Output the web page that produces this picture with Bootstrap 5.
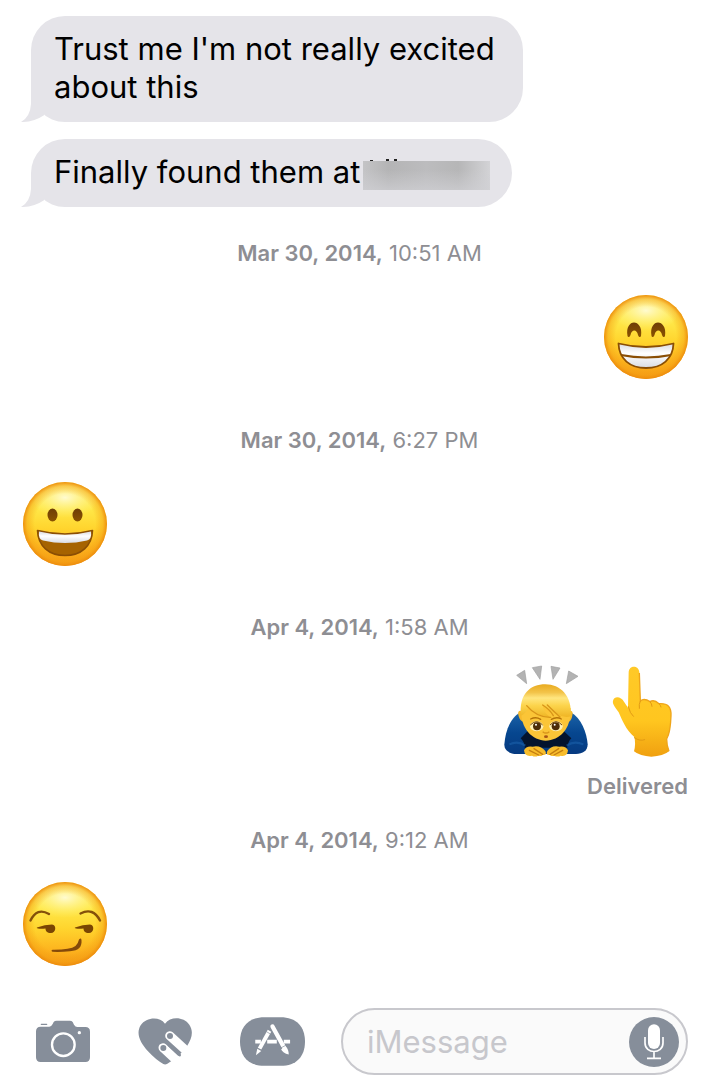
<!DOCTYPE html>
<html lang="en">
<head>
<meta charset="utf-8">
<meta name="viewport" content="width=device-width, initial-scale=1">
<title>Messages</title>
<link rel="stylesheet" href="https://cdn.jsdelivr.net/npm/bootstrap@5.3.0/dist/css/bootstrap.min.css">
<style>
  body { font-family: Inter, "Liberation Sans", sans-serif; color: #000; background: #fff; }
  svg { display: block; flex: none; }
  .thread { padding: 16px 31px 0 23px; }
  .bubble { max-width: 74%; margin-left: 8px; padding: 14px 22px 16px 23px; border-radius: 34px; background: #e5e4e9; font-size: 31px; line-height: 38px; }
  .bubble + .bubble { margin-top: 17px; }
  .tail { left: -10px; bottom: 0; fill: #e5e4e9; }
  .redacted { display: inline-block; vertical-align: -7px; margin-left: -6px; }
  .stamp { margin: 47px 0 28px 8px; font-size: 22px; line-height: 28px; color: #8e8e93; }
  .bubble + .stamp { margin-top: 32px; }
  .stamp b, .receipt { font-weight: 600; }
  .receipt { margin-top: 15px; font-size: 22px; line-height: 28px; color: #8e8e93; }
  .receipt + .stamp { margin-top: 26px; }
  .tall-row { margin-top: -4px; }
  .composer { padding: 24px 31px 8px 36px; }
  .tools { gap: 48px; margin-right: 36px; }
  .tools button, .mic { background: none; line-height: 0; }
  .field { min-width: 0; height: 67px; border: 2px solid #c8c8cd; border-radius: 34px; background: #fafafa; padding: 0 7px 0 24px; }
  .field input { min-width: 0; font-size: 31px; line-height: 38px; color: #000; outline: 0; }
  .field input::placeholder { color: #c7c7cc; opacity: 1; }
</style>
</head>
<body>
<svg width="0" height="0" class="position-absolute" aria-hidden="true">
  <defs>
    <linearGradient id="skin" x1="0" y1="0" x2="0" y2="1">
      <stop offset="0" stop-color="#fff06a"/><stop offset=".3" stop-color="#ffe94a"/><stop offset=".55" stop-color="#ffd52e"/><stop offset=".8" stop-color="#fdb51f"/><stop offset="1" stop-color="#f59a15"/>
    </linearGradient>
    <radialGradient id="rim" cx=".5" cy=".5" r=".5">
      <stop offset=".72" stop-color="#f29a10" stop-opacity="0"/><stop offset=".9" stop-color="#f39c12" stop-opacity=".45"/><stop offset="1" stop-color="#ec8a0c" stop-opacity=".95"/>
    </radialGradient>
    <radialGradient id="shine" cx=".5" cy=".4" r=".6">
      <stop offset="0" stop-color="#fffbd0"/><stop offset="1" stop-color="#fff27a" stop-opacity="0"/>
    </radialGradient>
    <linearGradient id="teeth" x1="0" y1="0" x2="0" y2="1">
      <stop offset="0" stop-color="#d9dbe2"/><stop offset=".4" stop-color="#fff"/><stop offset="1" stop-color="#d9dce3"/>
    </linearGradient>
    <linearGradient id="eye" x1="0" y1="0" x2="0" y2="1">
      <stop offset="0" stop-color="#6e3d06"/><stop offset="1" stop-color="#8a5200"/>
    </linearGradient>
    <linearGradient id="blue" x1="0" y1="0" x2="0" y2="1">
      <stop offset="0" stop-color="#1b63a8"/><stop offset=".5" stop-color="#06468f"/><stop offset="1" stop-color="#063a80"/>
    </linearGradient>
    <linearGradient id="hair" x1="0" y1="0" x2="0" y2="1">
      <stop offset="0" stop-color="#e9ab20"/><stop offset=".25" stop-color="#f3c44a"/><stop offset=".42" stop-color="#ffe680"/><stop offset=".65" stop-color="#fcd44c"/><stop offset="1" stop-color="#efb525"/>
    </linearGradient>
    <linearGradient id="hand" x1="0" y1="0" x2="0" y2="1">
      <stop offset="0" stop-color="#ffc928"/><stop offset=".6" stop-color="#ffc61f"/><stop offset="1" stop-color="#f0a010"/>
    </linearGradient>
    <linearGradient id="mosaic" x1="0" x2="1">
      <stop offset="0" stop-color="#c4c4c6"/><stop offset=".2" stop-color="#b4b4b5"/><stop offset=".5" stop-color="#bcbcbe"/><stop offset=".75" stop-color="#b6b6b7"/><stop offset="1" stop-color="#d3d3d6"/>
    </linearGradient>
    <linearGradient id="mosaicFade" x1="0" y1="0" x2="0" y2="1">
      <stop offset=".3" stop-color="#d0d0d4" stop-opacity="0"/><stop offset="1" stop-color="#d0d0d4" stop-opacity=".7"/>
    </linearGradient>
    <symbol id="face" viewBox="0 0 84 84">
      <circle cx="42" cy="42" r="42" fill="url(#skin)"/>
      <ellipse cx="42" cy="19" rx="31" ry="17" fill="url(#shine)"/>
      <circle cx="42" cy="42" r="42" fill="url(#rim)"/>
    </symbol>
    <symbol id="tailShape" viewBox="32 250 69 102">
      <path d="M62 250V298Q60 336 32 352Q70 353 101 332V250Z"/>
    </symbol>
  </defs>
</svg>

<div class="d-flex flex-column min-vh-100">
  <main class="thread d-flex flex-column">
    <div class="bubble position-relative align-self-start">Trust me I'm not really excited about this
      <svg class="tail position-absolute" width="23" height="34" aria-hidden="true"><use href="#tailShape"/></svg>
    </div>
    <div class="bubble position-relative align-self-start">Finally found them at
      <svg class="redacted" width="127" height="31" viewBox="0 0 127 31" role="img" aria-label="Hidden name">
        <path d="M7 1h3v1H7zM23 0h3v2h-3zM31 0h3v2h-3z" fill="#222"/>
        <path d="M0 2h127v29H0z" fill="url(#mosaic)"/><path d="M0 2h127v29H0z" fill="url(#mosaicFade)"/>
      </svg>
      <svg class="tail position-absolute" width="23" height="34" aria-hidden="true"><use href="#tailShape"/></svg>
    </div>

    <div class="stamp text-center"><b>Mar 30, 2014,</b> 10:51 AM</div>
    <div class="d-flex justify-content-end">
      <svg width="84" height="84" viewBox="0 0 84 84" role="img" aria-label="Beaming face">
        <use href="#face" width="84" height="84"/>
        <path d="M23.500 41C22 32 26 27.500 30 27.500S38.500 32 37 41C36.500 43 34.500 42 34 40C33 34 27.500 34 26.500 40C26 42 24 43 23.500 41Z" fill="url(#eye)"/>
        <path d="M47.500 41C46 32 50 27.500 54 27.500S62.500 32 61 41C60.500 43 58.500 42 58 40C57 34 51.500 34 50.500 40C50 42 48 43 47.500 41Z" fill="url(#eye)"/>
        <path d="M14.500 48.500Q42 55.500 69.500 48.500C69 64 58 73 42 73S15 64 14.500 48.500Z" fill="url(#teeth)" stroke="#8a4e04" stroke-width="1.800" stroke-linejoin="round"/>
        <path d="M17 60Q42 65 67 60" fill="none" stroke="#8a4e04" stroke-width="2"/>
      </svg>
    </div>

    <div class="stamp text-center"><b>Mar 30, 2014,</b> 6:27 PM</div>
    <div class="d-flex">
      <svg width="84" height="84" viewBox="0 0 84 84" role="img" aria-label="Grinning face">
        <use href="#face" width="84" height="84"/>
        <ellipse cx="29.500" cy="33" rx="5" ry="6.500" fill="url(#eye)"/><ellipse cx="54.500" cy="33" rx="5" ry="6.500" fill="url(#eye)"/>
        <path d="M14.500 48.500Q42 55.500 69.500 48.500C69 64 58 73.500 42 73.500S15 64 14.500 48.500Z" fill="#a66300" stroke="#8a4e04" stroke-width="1.600" stroke-linejoin="round"/>
        <path d="M16 49.500Q42 56 68 49.500Q69 57 64 58.500Q42 63.500 20 58.500Q15 57 16 49.500Z" fill="url(#teeth)"/>
      </svg>
    </div>

    <div class="stamp text-center"><b>Apr 4, 2014,</b> 1:58 AM</div>
    <div class="tall-row d-flex justify-content-end gap-3">
      <svg width="84" height="92" viewBox="42 30 252 276" role="img" aria-label="Person bowing">
        <g fill="#b3b3b3" stroke="#a0a0a0" stroke-width="2" stroke-linejoin="round"><path d="M80 61L104 46L110 86Z"/><path d="M127 38L155 33L150 73Z"/><path d="M183 34L210 39L189 73Z"/><path d="M236 48L264 64L229 86Z"/></g>
        <path d="M43 268C46 232 58 190 92 172H242C274 190 290 232 293 268C293 288 278 297 258 297H80C60 297 43 288 43 268Z" fill="url(#blue)"/>
        <path d="M92 250Q104 262 104 278H232Q234 260 244 250L218 225H116Z" fill="#04142e"/>
        <path d="M58 268Q84 256 106 272M280 268Q252 256 230 272" fill="none" stroke="#1b61aa" stroke-width="6" opacity=".6"/>
        <path d="M96 168Q80 164 86 184Q92 202 102 200ZM238 168Q252 164 246 186Q242 202 232 200Z" fill="#f5b92c"/>
        <path d="M93 160C91 224 128 256 167 257C208 256 244 224 242 160Q168 110 93 160Z" fill="#fbc537"/>
        <path d="M93 182C86 116 122 88 166 88S248 122 242 184Q222 190 200 176Q174 162 158 150Q160 172 180 186Q140 184 116 158Q106 176 93 182Z" fill="url(#hair)"/>
        <path d="M110 152Q140 188 182 187M158 150Q180 164 190 182M172 150Q194 172 210 186" fill="none" stroke="#d89519" stroke-width="4" stroke-linecap="round"/>
        <path d="M122 192Q138 184 152 193M184 193Q200 184 214 192" fill="none" stroke="#b67409" stroke-width="4" stroke-linecap="round"/>
        <ellipse cx="140" cy="214" rx="20" ry="15" fill="#fff0b5"/><ellipse cx="198" cy="214" rx="20" ry="15" fill="#fff0b5"/>
        <circle cx="141" cy="214" r="12" fill="#4c2c08"/><circle cx="197" cy="214" r="12" fill="#4c2c08"/><circle cx="138" cy="209" r="3" fill="#fff"/><circle cx="194" cy="209" r="3" fill="#fff"/>
        <path d="M121 210Q140 190 158 210M180 210Q198 190 216 210" fill="none" stroke="#6f4308" stroke-width="3"/>
        <path d="M158 230Q168 238 178 230" fill="none" stroke="#d8951b" stroke-width="4"/><ellipse cx="168" cy="245" rx="6" ry="4" fill="#a95516"/>
        <path d="M102 286Q108 272 128 275Q152 270 166 288Q172 301 158 300Q156 305 145 302Q135 307 126 302Q104 306 102 286Z" fill="#f8bd2c"/>
        <path d="M234 286Q228 272 208 275Q184 270 172 288Q166 301 180 300Q182 305 193 302Q203 307 212 302Q232 306 234 286Z" fill="#f8bd2c"/>
        <path d="M118 286L146 300M132 281L158 298M218 286L192 300M206 281L180 298" stroke="#c47d10" stroke-width="4" stroke-linecap="round"/>
      </svg>
      <svg width="84" height="92" viewBox="342 30 252 276" role="img" aria-label="Pointing up">
        <path d="M416 52C417 30 446 30 448 52L451 138Q462 128 480 140Q492 132 507 146C534 144 544 156 543 182C542 214 540 234 530 252Q530 272 537 289Q520 304 484 305Q450 304 432 289Q438 266 433 246C406 222 398 198 386 172C378 158 366 148 369 137C374 121 394 126 402 140L414 158Z" fill="url(#hand)"/>
        <path d="M448 54L451 138Q462 128 480 140Q492 132 507 146C534 144 544 156 543 182C542 214 540 234 530 252Q530 272 537 289" fill="none" stroke="#efa51a" stroke-width="4"/>
        <path d="M415 155Q420 176 430 184M451 138Q446 148 448 160M480 140Q486 146 486 154M507 146Q512 150 513 156M433 248Q450 260 464 254" fill="none" stroke="#e29a14" stroke-width="3" stroke-linecap="round"/>
      </svg>
    </div>
    <div class="receipt text-end">Delivered</div>

    <div class="stamp text-center"><b>Apr 4, 2014,</b> 9:12 AM</div>
    <div class="d-flex">
      <svg width="84" height="84" viewBox="0 0 84 84" role="img" aria-label="Smirking face">
        <use href="#face" width="84" height="84"/>
        <path d="M7.500 38.500Q14 25 26 32M57.500 31.500Q70 25 77 38.500" fill="none" stroke="#84500a" stroke-width="2.400" stroke-linecap="round"/>
        <path d="M14 45.500Q22 42.500 29 42.500C34 43 33 51 28 51C24 51 22.500 49 22.500 46.500Q18 47 15 46.500Q13 46 14 45.500Z" fill="#7a4503"/>
        <path d="M52 45.500Q60 42.500 67 42.500C72 43 71 51 66 51C62 51 60.500 49 60.500 46.500Q56 47 53 46.500Q51 46 52 45.500Z" fill="#7a4503"/>
        <path d="M29.500 67.800Q47 68 52.500 64Q55 62 56 57.500Q58 55.500 58.500 58C59 65 56 68.500 47 69.200Q38 70.200 29.500 69.800Q27.500 68.500 29.500 67.800Z" fill="#84490a"/>
      </svg>
    </div>
  </main>

  <footer class="composer d-flex align-items-center mt-auto">
    <div class="tools d-flex align-items-center">
      <button type="button" class="border-0 p-0" aria-label="Camera">
        <svg width="54" height="44" viewBox="48 57 162 132"><path d="M64 70h16" stroke="#868e9a" stroke-width="4" stroke-linecap="round"/><path d="M62 77H88Q94 77 98 69L101 63Q104 59 110 59H149Q155 59 158 63L162 71Q166 78 172 78H196Q210 78 210 92V169Q210 183 196 183H62Q48 183 48 169V91Q48 77 62 77Z" fill="#868e9a"/><circle cx="130" cy="131" r="34" fill="none" stroke="#fff" stroke-width="7"/><circle cx="178" cy="95" r="5" fill="#fff"/></svg>
      </button>
      <button type="button" class="border-0 p-0" aria-label="Digital Touch">
        <svg width="54" height="47" viewBox="354 54 162 141"><path d="M435 71C418 48 378 52 362 76C347 101 360 127 384 154Q408 180 430 192Q436 195 442 191Q480 168 500 140C518 114 520 92 508 74C491 50 452 48 435 71Z" fill="#868e9a"/><path d="M449 107L516 168M429 143L490 200" stroke="#fff" stroke-width="27" stroke-linecap="round"/><path d="M449 137L479 165" stroke="#868e9a" stroke-width="8" stroke-linecap="round"/><circle cx="450" cy="108" r="9" fill="#868e9a"/><circle cx="430" cy="144" r="9" fill="#868e9a"/></svg>
      </button>
      <button type="button" class="border-0 p-0" aria-label="App Store">
        <svg width="65" height="49" viewBox="659 51 196 147"><path d="M733 51H781C829 51 855 79 855 124.500S829 198 781 198H733C685 198 659 170 659 124.500S685 51 733 51Z" fill="#868e9a"/><g stroke="#fff" fill="none"><path d="M705 125H722M741 125H770M791 125H810" stroke-width="11"/><path d="M748 92L718 146" stroke-width="12"/><path d="M757 79L793 145" stroke-width="13" stroke-linecap="round"/></g><path d="M711 146L723 153L707 166Z" fill="#fff"/><path d="M783 148L797 140Q806 147 806 164Q788 160 783 148Z" fill="#fff"/><path d="M782 144L797 136M739 95L751 102" stroke="#868e9a" stroke-width="2"/></svg>
      </button>
    </div>
    <div class="field d-flex align-items-center flex-grow-1">
      <input type="text" class="border-0 bg-transparent p-0 flex-grow-1 w-100" placeholder="iMessage" aria-label="iMessage">
      <button type="button" class="mic border-0 p-0" aria-label="Dictate">
        <svg width="50" height="50" viewBox="0 0 150 150"><circle cx="75" cy="75" r="75" fill="#868e9a"/><rect x="57" y="22" width="36" height="74" rx="18" fill="#fff"/><path d="M48 60V78C48 112 102 112 102 78V60M75 105V123M54 124H96" fill="none" stroke="#fff" stroke-width="5"/></svg>
      </button>
    </div>
  </footer>
</div>
<script src="https://cdn.jsdelivr.net/npm/bootstrap@5.3.0/dist/js/bootstrap.bundle.min.js"></script>
</body>
</html>
